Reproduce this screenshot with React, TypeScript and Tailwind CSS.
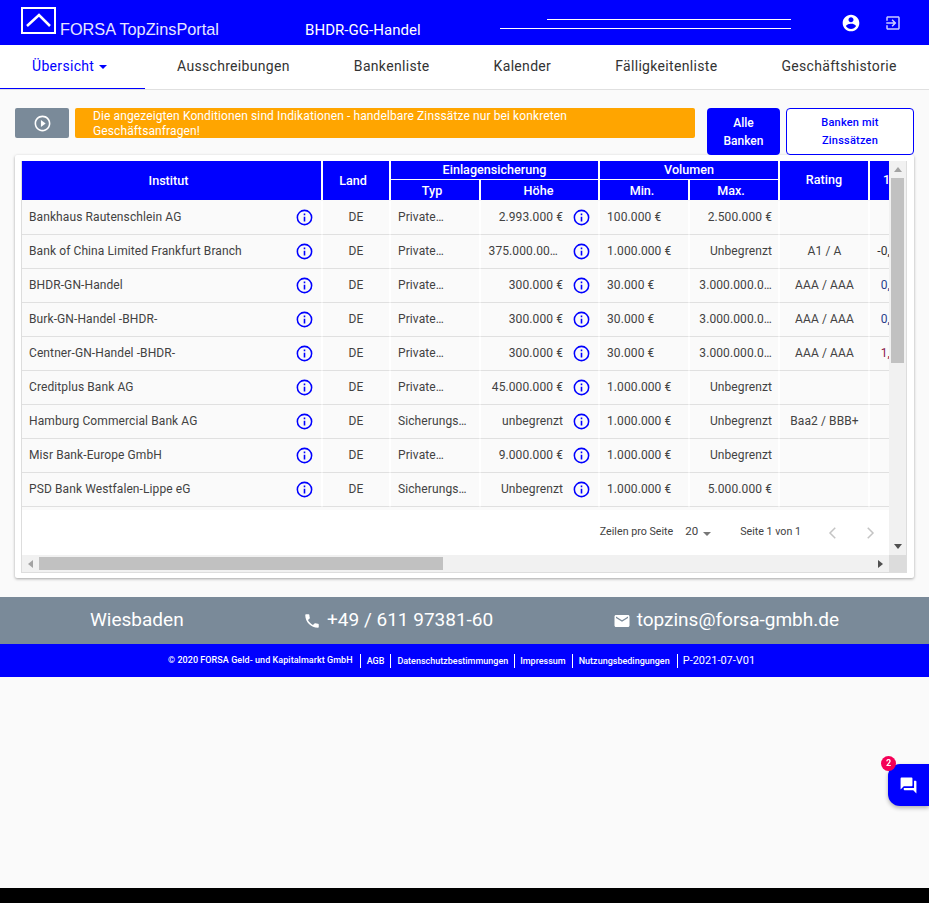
import { ReactNode } from 'react';

const rows = [
  { name: 'Bankhaus Rautenschlein AG', typ: 'Private…', hoehe: '2.993.000 €', min: '100.000 €', max: '2.500.000 €', rating: '', rate: '', rateClass: '' },
  { name: 'Bank of China Limited Frankfurt Branch', typ: 'Private…', hoehe: '375.000.00…', min: '1.000.000 €', max: 'Unbegrenzt', rating: 'A1 / A', rate: '-0,', rateClass: 'text-[#333333]' },
  { name: 'BHDR-GN-Handel', typ: 'Private…', hoehe: '300.000 €', min: '30.000 €', max: '3.000.000.0…', rating: 'AAA / AAA', rate: '0,', rateClass: 'text-[#27408b]' },
  { name: 'Burk-GN-Handel -BHDR-', typ: 'Private…', hoehe: '300.000 €', min: '30.000 €', max: '3.000.000.0…', rating: 'AAA / AAA', rate: '0,', rateClass: 'text-[#27408b]' },
  { name: 'Centner-GN-Handel -BHDR-', typ: 'Private…', hoehe: '300.000 €', min: '30.000 €', max: '3.000.000.0…', rating: 'AAA / AAA', rate: '1,', rateClass: 'text-[#8b1a4a]' },
  { name: 'Creditplus Bank AG', typ: 'Private…', hoehe: '45.000.000 €', min: '1.000.000 €', max: 'Unbegrenzt', rating: '', rate: '', rateClass: '' },
  { name: 'Hamburg Commercial Bank AG', typ: 'Sicherungs…', hoehe: 'unbegrenzt', min: '1.000.000 €', max: 'Unbegrenzt', rating: 'Baa2 / BBB+', rate: '', rateClass: '' },
  { name: 'Misr Bank-Europe GmbH', typ: 'Private…', hoehe: '9.000.000 €', min: '1.000.000 €', max: 'Unbegrenzt', rating: '', rate: '', rateClass: '' },
  { name: 'PSD Bank Westfalen-Lippe eG', typ: 'Sicherungs…', hoehe: 'Unbegrenzt', min: '1.000.000 €', max: '5.000.000 €', rating: '', rate: '', rateClass: '' },
];

const tabs = ['Ausschreibungen', 'Bankenliste', 'Kalender', 'Fälligkeitenliste', 'Geschäftshistorie'];

const colTemplate = 'grid grid-cols-[299px_2px_66px_2px_88px_2px_117px_2px_88px_2px_88px_2px_88px_2px_20px]';

function MdIcon({ d, className }: { d: string; className?: string }) {
  return (
    <svg viewBox="0 0 24 24" fill="currentColor" className={className}>
      <path d={d} />
    </svg>
  );
}

function InfoIcon() {
  return (
    <MdIcon
      className="w-[19px] h-[19px] text-[#0000ff] shrink-0"
      d="M11,9H13V7H11M12,20C7.59,20 4,16.41 4,12C4,7.59 7.59,4 12,4C16.41,4 20,7.59 20,12C20,16.41 16.41,20 12,20M12,2A10,10 0 0,0 2,12A10,10 0 0,0 12,22A10,10 0 0,0 12,2M11,17H13V11H11V17Z"
    />
  );
}

function Gap() {
  return <div className="bg-white" />;
}

function RowGap() {
  return <div className="bg-white border-b border-[#ececec]" />;
}

function Cell({ children, className = '' }: { children?: ReactNode; className?: string }) {
  return <div className={`bg-[#fafafa] border-b border-[#e0e0e0] pb-[1px] flex items-center overflow-hidden whitespace-nowrap ${className}`}>{children}</div>;
}

function HeadCell({ children, className = '' }: { children: ReactNode; className?: string }) {
  return <div className={`bg-[#0000ff] text-white font-medium text-[12.6px] flex items-center justify-center ${className}`}>{children}</div>;
}

function Arrow({ className }: { className: string }) {
  return <div className={`w-0 h-0 border-solid border-transparent ${className}`} />;
}

export default function App() {
  return (
    <div className="h-[903px] overflow-hidden bg-black font-['Roboto',sans-serif] text-[#333333]">
      <div className="h-[888px] bg-[#fafafa]">
        <header className="h-[45px] bg-[#0000ff] text-white flex">
          <div className="w-[305px] pl-[21px] pt-[7px] flex items-start">
            <div className="w-[35px] h-[27px] border-[2px] border-white flex items-center justify-center shrink-0">
              <svg viewBox="0 0 31 23" className="w-[31px] h-[23px]" fill="none" stroke="white" strokeWidth="2.5">
                <path d="M4 17 L16 6 L27 17" />
              </svg>
            </div>
            <span className="ml-[4px] mt-[13px] text-[16.3px] leading-[19px] font-['Liberation_Sans',sans-serif] text-[#e6e6ff]">FORSA TopZinsPortal</span>
          </div>
          <div className="w-[195px] pt-[21px] text-[15px] leading-[18px] tracking-[0.05px]">BHDR-GG-Handel</div>
          <div className="w-[291px] pt-[19px] flex flex-col items-end gap-[8px]">
            <div className="w-[244px] h-px bg-white" />
            <div className="w-[291px] h-px bg-white" />
          </div>
          <div className="flex-1 flex items-center pl-[50px]">
            <MdIcon className="w-[20px] h-[20px]" d="M12 2C6.48 2 2 6.48 2 12s4.48 10 10 10 10-4.48 10-10S17.52 2 12 2zm0 3c1.66 0 3 1.34 3 3s-1.34 3-3 3-3-1.34-3-3 1.34-3 3-3zm0 14.2c-2.5 0-4.71-1.28-6-3.22.03-1.99 4-3.08 6-3.08 1.99 0 5.97 1.09 6 3.08-1.29 1.94-3.5 3.22-6 3.22z" />
            <MdIcon className="w-[18px] h-[18px] ml-[23px] text-[#ccccff]" d="M10.09 15.59L11.5 17l5-5-5-5-1.41 1.41L12.67 11H3v2h9.67l-2.58 2.59zM19 3H5c-1.11 0-2 .9-2 2v4h2V5h14v14H5v-4H3v4c0 1.1.89 2 2 2h14c1.1 0 2-.9 2-2V5c0-1.1-.9-2-2-2z" />
          </div>
        </header>

        <nav className="h-[45px] bg-white border-b border-[#e0e0e0] flex text-[14px] tracking-[0.32px]">
          <div className="w-[145px] h-[44px] shrink-0 border-b border-[#0000ff] pl-[32px] pb-[1px] flex items-center text-[#0000ff]">
            Übersicht
            <Arrow className="ml-[5px] mt-[1px] border-x-[4px] border-t-[4px] border-t-[#0000ff]" />
          </div>
          {tabs.map((t) => (
            <div key={t} className="px-8 pb-[2px] flex items-center whitespace-nowrap shrink-0">{t}</div>
          ))}
        </nav>

        <main className="px-[15px] pt-[18px]">
          <div className="flex h-[47px]">
            <div className="w-[54px] h-[30px] bg-[#7a8a99] rounded-[2px] flex items-center justify-center text-white">
              <MdIcon className="w-[19px] h-[19px]" d="M10 16.5l6-4.5-6-4.5v9zM12 2C6.48 2 2 6.48 2 12s4.48 10 10 10 10-4.48 10-10S17.52 2 12 2zm0 18c-4.41 0-8-3.59-8-8s3.59-8 8-8 8 3.59 8 8-3.59 8-8 8z" />
            </div>
            <div className="w-[620px] h-[30px] ml-[6px] bg-[#ffa500] rounded-[2px] text-white text-[12px] leading-[14.5px] pl-[18px] pr-[60px] pt-[1px] tracking-[0.11px]">
              Die angezeigten Konditionen sind Indikationen - handelbare Zinssätze nur bei konkreten Geschäftsanfragen!
            </div>
            <button className="w-[73px] h-[47px] ml-[12px] bg-[#0000ff] rounded-[4px] text-white text-[12px] leading-[18px] font-medium">
              Alle<br />Banken
            </button>
            <button className="w-[128px] h-[47px] ml-[6px] bg-white border border-[#0000ff] rounded-[4px] text-[#0000ff] text-[11px] leading-[18px] font-medium tracking-[0.2px]">
              Banken mit<br />Zinssätzen
            </button>
          </div>

          <div className="w-[899px] h-[423px] bg-white p-[6px] rounded-[2px] shadow-[0_1px_3px_rgba(0,0,0,0.35)]">
            <div className="w-[886px] h-[412px] border border-[#dddddd] border-t-0 flex flex-col">
              <div className="flex h-[394px]">
                <div className="w-[868px] overflow-hidden flex flex-col">
                  <div className={`${colTemplate} grid-rows-[18px_1px_20px] h-[39px]`}>
                    <HeadCell className="row-span-3 pt-[2px] pr-[6px]">Institut</HeadCell>
                    <div className="row-span-3 bg-white" />
                    <HeadCell className="row-span-3 pt-[2px] pr-[6px]">Land</HeadCell>
                    <div className="row-span-3 bg-white" />
                    <HeadCell className="col-span-3">Einlagensicherung</HeadCell>
                    <div className="row-span-3 bg-white" />
                    <HeadCell className="col-span-3">Volumen</HeadCell>
                    <div className="row-span-3 bg-white" />
                    <HeadCell className="row-span-3 pb-[1px]">Rating</HeadCell>
                    <div className="row-span-3 bg-white" />
                    <HeadCell className="row-span-3 justify-start pl-[13px] overflow-hidden">1</HeadCell>
                    <div className="col-span-3 bg-white" />
                    <div className="col-span-3 bg-white" />
                    <HeadCell className="pt-[3px] pr-[6px]">Typ</HeadCell>
                    <Gap />
                    <HeadCell className="pt-[3px] pr-[2px]">Höhe</HeadCell>
                    <HeadCell className="pt-[3px] pr-[4px]">Min.</HeadCell>
                    <Gap />
                    <HeadCell className="pt-[3px] pr-[6px]">Max.</HeadCell>
                  </div>
                  <div className="h-px bg-[#fafafa]" />

                  {rows.map((r) => (
                    <div key={r.name} className={`${colTemplate} h-[34px] text-[12px] tracking-[0.1px] text-[#424242]`}>
                      <Cell className="pl-[7px] pr-[7px] justify-between">
                        {r.name}
                        <InfoIcon />
                      </Cell>
                      <RowGap />
                      <Cell className="justify-center">DE</Cell>
                      <RowGap />
                      <Cell className="pl-[7px]">{r.typ}</Cell>
                      <RowGap />
                      <Cell className="justify-end pr-[7px]">
                        <span className={r.hoehe.endsWith('…') ? 'mr-[14px]' : 'mr-[9px]'}>{r.hoehe}</span>
                        <InfoIcon />
                      </Cell>
                      <RowGap />
                      <Cell className="pl-[7px]">{r.min}</Cell>
                      <RowGap />
                      <Cell className="justify-end pr-[6px]">{r.max}</Cell>
                      <RowGap />
                      <Cell className="justify-center pl-[1px]">{r.rating}</Cell>
                      <RowGap />
                      <Cell className={`justify-end ${r.rateClass}`}>{r.rate}</Cell>
                    </div>
                  ))}
                  <div className="h-[3px] bg-[#fafafa]" />

                  <div className="flex-1 flex items-center justify-end text-[10.7px] text-[#424242]">
                    <span>Zeilen pro Seite</span>
                    <span className="ml-[12px] text-[11.5px] mb-[1px]">20</span>
                    <Arrow className="ml-[5px] mt-[2px] border-x-[4px] border-t-[4px] border-t-[#777777]" />
                    <span className="ml-[29px]">Seite 1 von 1</span>
                    <svg viewBox="0 0 24 24" className="w-[18px] h-[18px] ml-[23px] text-[#c4c4c4]" fill="none" stroke="currentColor" strokeWidth="2"><path d="M15 5l-7 7 7 7" /></svg>
                    <svg viewBox="0 0 24 24" className="w-[18px] h-[18px] ml-[19px] mr-[10px] text-[#c4c4c4]" fill="none" stroke="currentColor" strokeWidth="2"><path d="M9 5l7 7-7 7" /></svg>
                  </div>
                </div>

                <div className="w-[17px] bg-[#f1f1f1] flex flex-col items-center">
                  <div className="h-[17px] flex items-center justify-center">
                    <Arrow className="border-x-[4px] border-b-[5px] border-b-[#a3a3a3]" />
                  </div>
                  <div className="w-[13px] h-[185px] bg-[#c1c1c1]" />
                  <div className="flex-1" />
                  <div className="h-[17px] flex items-center justify-center">
                    <Arrow className="border-x-[4px] border-t-[5px] border-t-[#505050]" />
                  </div>
                </div>
              </div>

              <div className="flex h-[17px]">
                <div className="w-[868px] bg-[#f1f1f1] flex items-center">
                  <div className="w-[17px] flex justify-center">
                    <Arrow className="border-y-[4px] border-r-[5px] border-r-[#a3a3a3]" />
                  </div>
                  <div className="w-[404px] h-[13px] bg-[#c1c1c1]" />
                  <div className="flex-1" />
                  <div className="w-[17px] flex justify-center">
                    <Arrow className="border-y-[4px] border-l-[5px] border-l-[#505050]" />
                  </div>
                </div>
                <div className="w-[17px] bg-[#dcdcdc]" />
              </div>
            </div>
          </div>
        </main>

        <div className="mt-[19px] h-[47px] bg-[#7a8a99] text-white text-[19px] flex items-center justify-between px-[90px]">
          <span>Wiesbaden</span>
          <span className="flex items-center">
            <MdIcon className="w-[18px] h-[18px] mr-[6px]" d="M6.62 10.79c1.44 2.83 3.76 5.14 6.59 6.59l2.2-2.2c.27-.27.67-.36 1.02-.24 1.12.37 2.33.57 3.57.57.55 0 1 .45 1 1V20c0 .55-.45 1-1 1-9.39 0-17-7.61-17-17 0-.55.45-1 1-1h3.5c.55 0 1 .45 1 1 0 1.25.2 2.45.57 3.57.11.35.03.74-.25 1.02l-2.2 2.2z" />
            +49 / 611 97381-60
          </span>
          <span className="flex items-center">
            <MdIcon className="w-[18px] h-[18px] mr-[6px]" d="M20 4H4c-1.1 0-1.99.9-1.99 2L2 18c0 1.1.9 2 2 2h16c1.1 0 2-.9 2-2V6c0-1.1-.9-2-2-2zm0 4l-8 5-8-5V6l8 5 8-5v2z" />
            topzins@forsa-gmbh.de
          </span>
        </div>

        <footer className="h-[33px] bg-[#0000ff] text-white flex items-center pl-[168px] text-[9px] font-medium">
          <span className="pr-[7px] tracking-[0.05px]">© 2020 FORSA Geld- und Kapitalmarkt GmbH</span>
          <span className="px-[6px] border-l border-white leading-[14px]">AGB</span>
          <span className="px-[6px] border-l border-white leading-[14px]">Datenschutzbestimmungen</span>
          <span className="pl-[5px] pr-[6px] border-l border-white leading-[14px]">Impressum</span>
          <span className="pl-[6px] pr-[7px] border-l border-white leading-[14px]">Nutzungsbedingungen</span>
          <span className="pl-[5px] border-l border-white leading-[14px] text-[11px] font-normal">P-2021-07-V01</span>
        </footer>
      </div>

      <div className="fixed left-[888px] top-[764px] w-[41px] h-[42px] bg-[#0000ff] rounded-l-[12px] shadow-[0_2px_4px_rgba(0,0,0,0.3)] flex items-center justify-center text-white">
        <MdIcon className="w-[19px] h-[19px]" d="M21 6h-2v9H6v2c0 .55.45 1 1 1h11l4 4V7c0-.55-.45-1-1-1zm-4 6V3c0-.55-.45-1-1-1H3c-.55 0-1 .45-1 1v14l4-4h10c.55 0 1-.45 1-1z" />
        <span className="absolute -left-[7px] -top-[8px] w-[15px] h-[15px] rounded-full bg-[#f50057] text-white text-[9px] font-bold flex items-center justify-center">2</span>
      </div>
    </div>
  );
}
